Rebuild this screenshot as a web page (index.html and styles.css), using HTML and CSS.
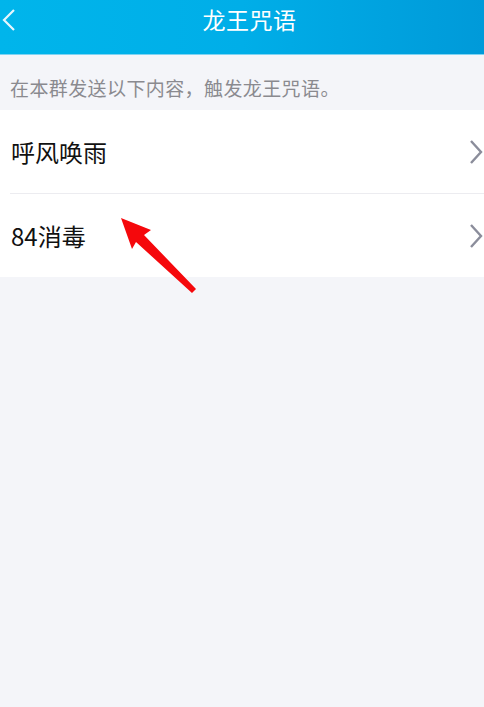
FILE: index.html
```html
<!DOCTYPE html>
<html lang="zh-CN">
<head>
<meta charset="utf-8">
<link rel="stylesheet" href="styles.css">
</head>
<body>
<div class="page">
  <header class="topbar">
    <svg class="back" width="16" height="22" viewBox="0 0 16 22"><path d="M13 1 L3 11 L13 21" fill="none" stroke="#e6f6fd" stroke-width="2.2"/></svg>
    <div class="title">龙王咒语</div>
  </header>
  <div class="hint">在本群发送以下内容，触发龙王咒语。</div>
  <ul class="list">
    <li class="item"><span class="label">呼风唤雨</span><svg class="chev" width="14" height="24" viewBox="0 0 14 24"><path d="M2 1 L12 12 L2 23" fill="none" stroke="#8b8d9b" stroke-width="2.4"/></svg></li>
    <li class="item"><span class="label">84消毒</span><svg class="chev" width="14" height="24" viewBox="0 0 14 24"><path d="M2 1 L12 12 L2 23" fill="none" stroke="#8b8d9b" stroke-width="2.4"/></svg></li>
  </ul>
  <svg class="arrow" width="484" height="707" viewBox="0 0 484 707"><polygon points="121,218 151,230 144,235 196,289 192,293 136,242 132,249" fill="#f5080c"/></svg>
</div>
</body>
</html>
```
FILE: styles.css
```css
* { box-sizing: border-box; }
html, body { margin: 0; padding: 0; }
body {
  width: 484px;
  height: 707px;
  background: #f4f5f9;
  font-family: "Noto Sans CJK SC", "Noto Sans", sans-serif;
  overflow: hidden;
}
.page { position: relative; width: 484px; height: 707px; }
.topbar {
  height: 55px;
  background: linear-gradient(90deg, #00b5eb 0%, #00aee8 50%, #009ad9 100%);
  display: flex;
  align-items: center;
  position: relative;
  border-bottom: 1px solid #7fd3f2;
}
.back { position: absolute; left: 1px; top: 9px; }
.title {
  flex: 1;
  text-align: center;
  color: #ffffff;
  font-size: 23px;
  line-height: 1;
  padding-left: 15px;
  margin-top: -16px;
  letter-spacing: 0.5px;
}
.hint {
  height: 55px;
  padding: 21px 0 0 10px;
  color: #8a8a8f;
  font-size: 19px;
  line-height: 24px;
  letter-spacing: 0.4px;
}
.list { list-style: none; margin: 0; padding: 0 0 0 10px; background: #fff; }
.item {
  height: 84px;
  display: flex;
  align-items: center;
  justify-content: space-between;
  border-bottom: 1px solid #ececf0;
}
.item:last-child { border-bottom: none; height: 83px; }
.label { color: #111; font-size: 24px; line-height: 1; padding-left: 1px; }
.chev { margin-right: 1px; }
.arrow { position: absolute; left: 0; top: 0; pointer-events: none; }
```
